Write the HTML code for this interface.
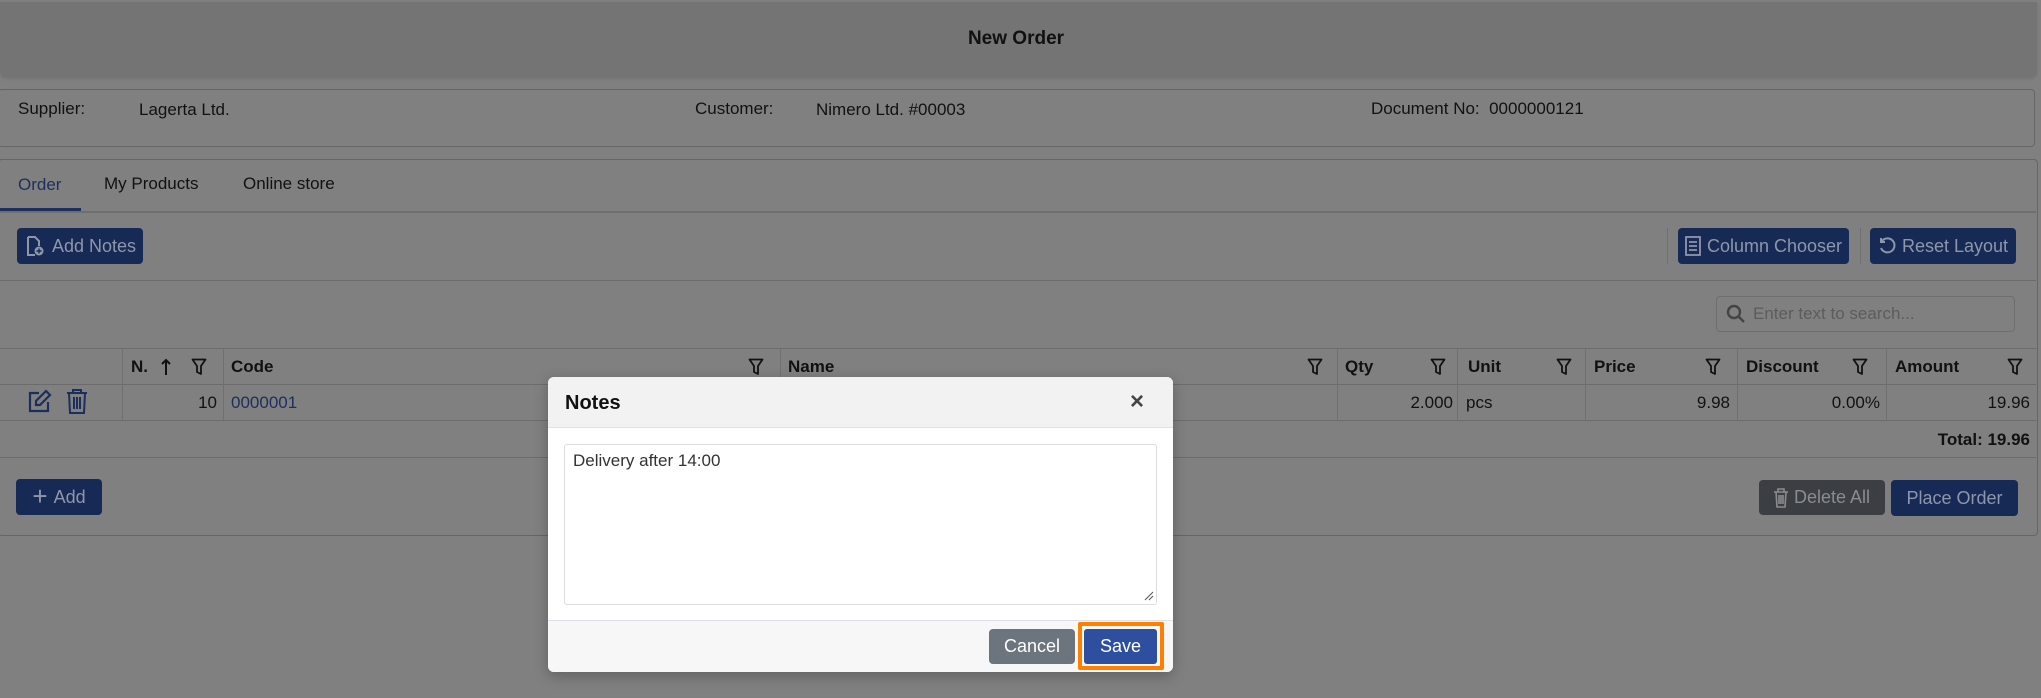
<!DOCTYPE html>
<html><head><meta charset="utf-8"><style>
*{box-sizing:border-box;margin:0;padding:0}
body{width:2041px;height:698px;background:#808080;font-family:"Liberation Sans",Arial,sans-serif;font-size:17px;color:#111;position:relative;overflow:hidden}
.a{position:absolute}
.hdr{left:0;top:2px;width:2037px;height:75px;background:#747474;border-radius:0 0 6px 6px;box-shadow:0 2px 3px rgba(0,0,0,.1)}
.box{border:1px solid #666;border-radius:4px}
.btn{position:absolute;background:#172a55;color:#8e96ab;border-radius:4px;display:flex;align-items:center;justify-content:center;gap:6px;font-size:18px}
.th{position:absolute;top:349px;height:35px;font-weight:bold;line-height:35px;font-size:17px}
.vl{position:absolute;width:1px;background:#707070}
.hl{position:absolute;height:1px;background:#6c6c6c}
.f{position:absolute;top:358px}
</style></head><body>
<div class="a hdr"></div>
<div class="a" style="left:0;width:2032px;top:28px;text-align:center;font-weight:bold;font-size:19px">New Order</div>

<div class="a box" style="left:-2px;top:89px;width:2037px;height:58px"></div>
<div class="a" style="left:18px;top:99px">Supplier:</div>
<div class="a" style="left:139px;top:100px">Lagerta Ltd.</div>
<div class="a" style="left:695px;top:99px">Customer:</div>
<div class="a" style="left:816px;top:100px">Nimero Ltd. #00003</div>
<div class="a" style="left:1371px;top:99px">Document No:&nbsp; 0000000121</div>

<div class="a box" style="left:-2px;top:159px;width:2040px;height:377px"></div>
<div class="a" style="left:18px;top:175px;color:#1c2f5c">Order</div>
<div class="a" style="left:104px;top:174px">My Products</div>
<div class="a" style="left:243px;top:174px">Online store</div>
<div class="hl" style="left:0;top:211px;width:2036px;height:2px;background:#6e6e6e"></div>
<div class="a" style="left:0;top:208px;width:81px;height:3px;background:#1c2f5c"></div>

<div class="btn" style="left:17px;top:228px;width:126px;height:36px"><svg width="22" height="22" viewBox="0 0 22 22" fill="none" stroke="#8e96ab" stroke-width="2"><path d="M4 2h7l4 4v5M4 2v18h7"/><circle cx="15" cy="16" r="4.5" fill="#8e96ab" stroke="none"/><path d="M15 13.5v5M12.5 16h5" stroke="#172a55" stroke-width="1.4"/></svg>Add Notes</div>
<div class="vl" style="left:1667px;top:228px;height:36px"></div>
<div class="btn" style="left:1678px;top:228px;width:171px;height:36px"><svg width="16" height="20" viewBox="0 0 16 20" fill="none" stroke="#8e96ab" stroke-width="1.8"><rect x="1" y="1" width="14" height="18"/><path d="M4 6h8M4 10h8M4 14h8"/></svg>Column Chooser</div>
<div class="vl" style="left:1860px;top:228px;height:36px"></div>
<div class="btn" style="left:1870px;top:228px;width:146px;height:36px"><svg width="18" height="18" viewBox="0 0 18 18" fill="none" stroke="#8e96ab" stroke-width="2"><path d="M4 4a7 7 0 1 1-1 7"/><path d="M3 1v4h4"/></svg>Reset Layout</div>
<div class="hl" style="left:0;top:280px;width:2036px"></div>

<div class="a" style="left:1716px;top:296px;width:299px;height:36px;border:1px solid #6e6e6e;border-radius:4px"></div>
<svg class="a" style="left:1726px;top:304px" width="20" height="20" viewBox="0 0 20 20" fill="none" stroke="#444" stroke-width="2.4"><circle cx="8" cy="8" r="6"/><path d="M12.5 12.5L18 18"/></svg>
<div class="a" style="left:1753px;top:304px;color:#5c5c5c;font-size:17px">Enter text to search...</div>

<div class="hl" style="left:0;top:348px;width:2036px"></div>
<div class="hl" style="left:0;top:384px;width:2036px"></div>
<div class="hl" style="left:0;top:420px;width:2036px"></div>
<div class="hl" style="left:0;top:457px;width:2036px"></div>
<div class="vl" style="left:122px;top:349px;height:71px"></div>
<div class="vl" style="left:223px;top:349px;height:71px"></div>
<div class="vl" style="left:780px;top:349px;height:71px"></div>
<div class="vl" style="left:1337px;top:349px;height:71px"></div>
<div class="vl" style="left:1457px;top:349px;height:71px"></div>
<div class="vl" style="left:1585px;top:349px;height:71px"></div>
<div class="vl" style="left:1737px;top:349px;height:71px"></div>
<div class="vl" style="left:1886px;top:349px;height:71px"></div>

<div class="th" style="left:131px">N.</div>
<svg class="a" style="left:160px;top:358px" width="12" height="18" viewBox="0 0 12 18" fill="none" stroke="#111" stroke-width="2"><path d="M6 17V2M2 6l4-4 4 4"/></svg>
<div class="th" style="left:231px">Code</div>
<div class="th" style="left:788px">Name</div>
<div class="th" style="left:1345px">Qty</div>
<div class="th" style="left:1468px">Unit</div>
<div class="th" style="left:1594px">Price</div>
<div class="th" style="left:1746px">Discount</div>
<div class="th" style="left:1895px">Amount</div>
<svg width="0" height="0" style="position:absolute"><defs><symbol id="fl" viewBox="0 0 16 18"><path d="M1.5 1.5h13L10 8v8L6 14V8z" fill="none" stroke="#111" stroke-width="1.8" stroke-linejoin="round"/></symbol></defs></svg>
<svg class="f" style="left:191px" width="16" height="18"><use href="#fl"/></svg>
<svg class="f" style="left:748px" width="16" height="18"><use href="#fl"/></svg>
<svg class="f" style="left:1307px" width="16" height="18"><use href="#fl"/></svg>
<svg class="f" style="left:1430px" width="16" height="18"><use href="#fl"/></svg>
<svg class="f" style="left:1556px" width="16" height="18"><use href="#fl"/></svg>
<svg class="f" style="left:1705px" width="16" height="18"><use href="#fl"/></svg>
<svg class="f" style="left:1852px" width="16" height="18"><use href="#fl"/></svg>
<svg class="f" style="left:2007px" width="16" height="18"><use href="#fl"/></svg>

<svg class="a" style="left:28px;top:389px" width="24" height="24" viewBox="0 0 24 24" fill="none" stroke="#1c2f5c" stroke-width="2.2"><path d="M11 4H2v18h18v-9"/><path d="M18 2l4 4-10 10H8v-4z"/></svg>
<svg class="a" style="left:66px;top:388px" width="22" height="26" viewBox="0 0 22 26" fill="none" stroke="#1c2f5c" stroke-width="2"><path d="M1 5h20M7 5V2h8v3M3 5l1 20h14l1-20M8 9v12M11 9v12M14 9v12"/></svg>
<div class="a" style="left:120px;width:97px;top:393px;text-align:right">10</div>
<div class="a" style="left:231px;top:393px;color:#1c2f5c">0000001</div>
<div class="a" style="left:1337px;width:116px;top:393px;text-align:right">2.000</div>
<div class="a" style="left:1466px;top:393px">pcs</div>
<div class="a" style="left:1585px;width:145px;top:393px;text-align:right">9.98</div>
<div class="a" style="left:1737px;width:143px;top:393px;text-align:right">0.00%</div>
<div class="a" style="left:1886px;width:144px;top:393px;text-align:right">19.96</div>
<div class="a" style="width:2030px;left:0;top:430px;text-align:right;font-weight:bold">Total: 19.96</div>

<div class="btn" style="left:16px;top:479px;width:86px;height:36px"><span style="font-size:26px;line-height:1;margin-top:-3px">+</span>Add</div>
<div class="btn" style="left:1759px;top:480px;width:126px;height:35px;background:#3b3e42;color:#8a8c8f"><svg width="14" height="20" viewBox="0 0 14 20" fill="none" stroke="#8a8c8f" stroke-width="1.6"><path d="M0 4h14M4 4V1h6v3M2 4l1 15h8l1-15M5 7v9M7 7v9M9 7v9"/></svg>Delete All</div>
<div class="btn" style="left:1891px;top:480px;width:127px;height:36px">Place Order</div>

<div class="a" style="left:548px;top:377px;width:625px;height:295px;background:#fff;border-radius:6px;overflow:hidden;box-shadow:0 4px 14px rgba(0,0,0,.25)">
 <div class="a" style="left:0;top:0;width:625px;height:51px;background:#f2f2f2;border-bottom:1px solid #dee2e6"></div>
 <div class="a" style="left:17px;top:15px;font-weight:bold;font-size:20px;color:#111">Notes</div>
 <div class="a" style="left:582px;top:11px;font-size:24px;color:#444;font-weight:bold">×</div>
 <div class="a" style="left:16px;top:67px;width:593px;height:161px;border:1px solid #ddd;border-radius:3px;padding:6px 8px;font-size:17px;color:#333">Delivery after 14:00</div>
 <svg class="a" style="left:596px;top:214px" width="10" height="10" viewBox="0 0 10 10" stroke="#555" stroke-width="1"><path d="M1 9L9 1M5 9L9 5"/></svg>
 <div class="a" style="left:0;top:243px;width:625px;height:52px;background:#f7f7f7;border-top:1px solid #dee2e6"></div>
 <div class="a" style="left:441px;top:252px;width:86px;height:35px;background:#6c757d;color:#fff;border-radius:4px;text-align:center;line-height:35px;font-size:18px">Cancel</div>
 <div class="a" style="left:530px;top:245px;width:86px;height:48px;border:4px solid #ff7f00;border-radius:2px"></div>
 <div class="a" style="left:536px;top:252px;width:73px;height:35px;background:#2e4fa0;color:#fff;border-radius:3px;text-align:center;line-height:35px;font-size:18px">Save</div>
</div>
</body></html>
